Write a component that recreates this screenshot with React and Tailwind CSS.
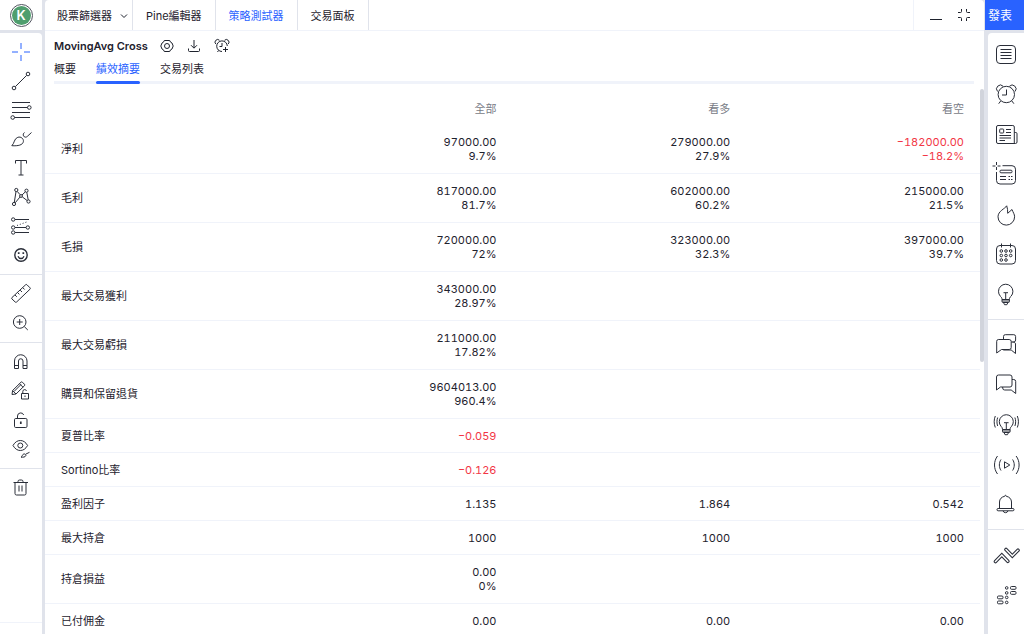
import React from "react";

const RED = "text-[#f23645]";

const toolGroups = [
  [
    {
      label: "十字準線",
      active: true,
      art: <path d="M3 12h6M15 12h6M12 3v6M12 15v6" />,
    },
    {
      label: "趨勢線",
      art: (
        <>
          <circle cx="5" cy="19" r="1.8" />
          <circle cx="19" cy="5" r="1.8" />
          <path d="M6.4 17.6 17.6 6.4" />
        </>
      ),
    },
    {
      label: "斐波那契",
      art: (
        <>
          <path d="M3 4.5h18M3 9.5h15.5M3 14.5h18M5.500 19.500h15.500" />
          <circle cx="20.300" cy="9.500" r="1.800" />
          <circle cx="3.700" cy="19.500" r="1.800" />
        </>
      ),
    },
    {
      label: "筆刷",
      art: (
        <>
          <path d="M2.8 18.7C5.5 16.5 5 11.5 8.8 10.3c3.2-1 6 1.5 5.6 4.2-.6 3.6-5.2 4.6-11.6 4.2z" />
          <path d="M15.5 5.5c-1.2.8-1.6 2.2-1 3.4.8 1.5 2.6 1.7 3.8.5L22.5 5.5" />
        </>
      ),
    },
    {
      label: "文字",
      art: <path d="M6.5 7.5V4.5h11v3M12 4.5v14.5M9.5 19h5" />,
    },
    {
      label: "型態",
      art: (
        <>
          <circle cx="7.3" cy="5" r="1.6" />
          <circle cx="17.5" cy="5.7" r="1.6" />
          <circle cx="19.5" cy="16.5" r="1.6" />
          <circle cx="5" cy="19" r="1.6" />
          <circle cx="12" cy="11" r="1.4" />
          <path d="M7 6.6 5.3 17.4M8.2 6.4 11.2 9.8M16.3 6.9 13 10M17.8 7.3l1.4 7.6M13.2 11.8l5 3.8M10.9 12.1 6.2 17.8" />
        </>
      ),
    },
    {
      label: "預測",
      art: (
        <>
          <circle cx="4.2" cy="5.5" r="1.7" />
          <circle cx="4.2" cy="13.5" r="1.7" />
          <circle cx="18.8" cy="13.5" r="1.7" />
          <circle cx="4.2" cy="18.5" r="1.7" />
          <path d="M6 5.5h14M6 13.5h11M6 18.5h14" />
          <path strokeDasharray="1 2" d="M8 11.5 19 7.5" />
        </>
      ),
    },
    {
      label: "圖示",
      art: (
        <>
          <circle cx="12" cy="12" r="6.200" strokeWidth="1.400" />
          <path strokeWidth="1.300" d="M9 13.200c.7 1.700 1.700 2.300 3 2.300s2.300-.6 3-2.300" />
          <path strokeWidth="1.700" d="M9.700 9.200v1.700M14.300 9.200v1.700" />
        </>
      ),
    },
  ],
  [
    {
      label: "測量",
      art: (
        <>
          <path d="M3 15.500 16.600 2.800a1 1 0 0 1 1.400 0l3 3a1 1 0 0 1 0 1.400L7.600 20a1 1 0 0 1-1.400 0L3 17a1 1 0 0 1 0-1.500z" />
          <path d="m6 13 1.800 1.800M8.600 10.600l1.800 1.800M11.200 8.200l1.800 1.800M13.800 5.700l1.800 1.800" />
        </>
      ),
    },
    {
      label: "放大",
      art: (
        <>
          <circle cx="10.700" cy="11" r="6.300" />
          <path d="m15.300 15.600 3.500 3.400M10.700 8v6M7.700 11h6" />
        </>
      ),
    },
  ],
  [
    {
      label: "磁鐵",
      art: (
        <>
          <path d="M5.500 18.500v-7.500a6.200 6.200 0 0 1 12.500 0v7.500h-4v-7.500a2.200 2.200 0 0 0-4.500 0v7.500z" />
          <path d="M5.500 15.500h4M14 15.500h4" />
        </>
      ),
    },
    {
      label: "保持繪圖模式",
      art: (
        <>
          <path d="m3 15.500.6-4L12 3.200a1 1 0 0 1 1.400 0L15.500 5.300a1 1 0 0 1 0 1.400L7 15z" />
          <path d="m10.500 4.700 3.500 3.500M5 12.500l7-7M3.600 11.500 7 15" />
          <path d="M12.500 14.500h7v5.500h-7zM13.800 14.500v-2a1.900 1.900 0 0 1 3.700-.6M16 16.500v1.500" />
        </>
      ),
    },
    {
      label: "鎖定",
      art: (
        <>
          <rect x="5.500" y="10.500" width="12.500" height="9" rx="1.200" />
          <path d="M8.500 10.500V8a3.200 3.200 0 0 1 6.200-1" />
          <path strokeWidth="1.700" d="M11.800 13.500v2.500" />
        </>
      ),
    },
    {
      label: "隱藏",
      art: (
        <>
          <path d="M4 8.500C6 5 8.500 3.500 11.300 3.500s5.300 1.500 7.300 5c-2 3.500-4.500 5-7.300 5S6 12 4 8.500z" />
          <circle cx="11.300" cy="8.500" r="2.500" />
          <path d="M12 20.200c1.600-.7 1-2.700 2.800-3.200 1.400-.4 2.500.8 2 1.800-.6 1.300-2.600 1.500-4.800 1.400zM17 17l3.500-1.700" />
        </>
      ),
    },
  ],
  [
    {
      label: "移除",
      art: (
        <>
          <path d="M4.500 6.500h14.500M6 6.500v11a1.500 1.500 0 0 0 1.500 1.500h8a1.500 1.500 0 0 0 1.500-1.500v-11M9 6.500v-1a1.500 1.500 0 0 1 1.500-1.500h2a1.500 1.500 0 0 1 1.500 1.500v1M10 9.500v6M13 9.500v6" />
        </>
      ),
    },
  ],
];

const widgetGroups = [
  [
    {
      label: "觀察清單",
      art: (
        <>
          <rect x="4.500" y="4.500" width="19" height="18" rx="3.500" />
          <path d="M8.500 8.500h11M8.500 11.500h11M8.500 14.500h11M8.500 17.500h11" />
        </>
      ),
    },
    {
      label: "警報",
      art: (
        <>
          <circle cx="14.300" cy="13.500" r="8.200" />
          <path d="M14.500 8.500v5.500h-4.500M8.700 20l-2 2.700M19.900 20l2 2.700M5.600 10.500A3.600 3.600 0 1 1 11.200 5.300M17.400 5.300a3.600 3.600 0 1 1 5.600 5.200" />
        </>
      ),
    },
    {
      label: "新聞",
      art: (
        <>
          <path d="M22.300 22.500H6a1.500 1.500 0 0 1-1.500-1.500V6A1.500 1.500 0 0 1 6 4.500h14.800a1.500 1.500 0 0 1 1.500 1.500zM22.300 11.500h1.500a1.200 1.200 0 0 1 1.200 1.200v8.300a1.500 1.500 0 0 1-1.500 1.500h-2" />
          <rect x="7.700" y="8" width="4" height="4" rx=".8" />
          <path d="M14 8.500h5M14 11.500h5M7.500 14.500h11.500M7.500 17h11.500M7.500 19.500h5.500" />
        </>
      ),
    },
    {
      label: "資料視窗",
      art: (
        <>
          <path d="M10.500 4.700H20a3.500 3.500 0 0 1 3.500 3.500V19.500a3.500 3.500 0 0 1-3.500 3.500H8a3.500 3.500 0 0 1-3.500-3.500V11" />
          <path d="M4.500 1v3M4.500 6v3M.5 5h3M5.500 5h3" />
          <rect x="8" y="9.200" width="12" height="2.600" rx="1" />
          <path d="M8 15.500h6M16.500 15.500h1.500M19 15.500h1.500M8 18.500h6M16.500 18.500h1.500M19 18.500h1.500" />
        </>
      ),
    },
    {
      label: "熱門清單",
      art: (
        <path d="M14.700 4.800C13 7.800 6 10 6 15.800a8.300 8.300 0 0 0 16.600 0c0-2.600-1.500-4.300-2.600-7.300l-4.300 3.800C15.800 9.500 15.500 7 14.700 4.800z" />
      ),
    },
    {
      label: "日曆",
      art: (
        <>
          <rect x="4.500" y="4.500" width="19" height="18.500" rx="3.500" />
          <path d="M9.500 2.500v4M18.500 2.500v4" />
          {[
            [9.3, 10],
            [14, 10],
            [18.7, 10],
            [9.3, 14.5],
            [14, 14.5],
            [18.7, 14.5],
            [9.3, 19],
            [14, 19],
          ].map(([x, y]) => (
            <circle key={`${x}-${y}`} cx={x} cy={y} r="1.3" />
          ))}
        </>
      ),
    },
    {
      label: "我的觀點",
      art: (
        <>
          <path d="M10 18.500c0-1.500-.5-2.200-1.600-3.200a7.200 7.200 0 1 1 10.600 0c-1.100 1-1.600 1.700-1.600 3.200z" />
          <path d="M13.700 18.500v-6.500M11.500 11.700h4.500M10 18.500v2a1 1 0 0 0 1 1h5.400a1 1 0 0 0 1-1v-2M11.500 21.500l1 2.200h2.400l1-2.200M10 20h7.400" />
        </>
      ),
    },
  ],
  [
    {
      label: "公開聊天",
      art: (
        <>
          <path d="M11.500 8.300V5.500a1.800 1.800 0 0 1 1.800-1.800h8.500a1.800 1.800 0 0 1 1.800 1.800V9a2 2 0 0 1-2 2h-2.500M20.500 11c1.800 0 3 .7 3 2v9.500l-4.300-3.500h-7.500a1 1 0 0 1-.9-.8" />
          <path d="M6.300 8.500h10.900a2 2 0 0 1 2 2v6a2 2 0 0 1-2 2H9.500L4.700 22V10.300a1.800 1.800 0 0 1 1.600-1.800z" fill="#fff" />
        </>
      ),
    },
    {
      label: "私人聊天",
      art: (
        <>
          <path d="M20 8.500h1.700a2 2 0 0 1 2 2V22.500l-4.500-3.500h-6.500a2 2 0 0 1-2-2v-1" />
          <path d="M6.500 4H18a2 2 0 0 1 2 2v8a2 2 0 0 1-2 2H8.500L4.500 19V6a2 2 0 0 1 2-2z" fill="#fff" />
        </>
      ),
    },
    {
      label: "觀點串流",
      art: (
        <>
          <path d="M10.500 18.500c0-1.500-.5-2.200-1.500-3.200a7 7 0 1 1 10.600 0c-1 1-1.500 1.700-1.500 3.200z" />
          <path d="M14.300 18.500v-6.500M12 11.700h4.600M10.500 18.500v2a1 1 0 0 0 1 1h5.600a1 1 0 0 0 1-1v-2M12 21.500l1 2.200h2.500l1-2.200M10.500 20h7.600" />
          <path d="M5.700 6.500c-1 2.500-1 6 0 8.500M3.300 5c-1.500 3.500-1.500 8 0 11.500M22.900 6.500c1 2.500 1 6 0 8.500M25.300 5c1.500 3.500 1.500 8 0 11.500" />
        </>
      ),
    },
    {
      label: "直播",
      art: (
        <>
          <path d="m12.500 10.800 5.300 3.200-5.300 3.200zM9 8.500c-2.200 3.300-2.200 7.700 0 11M20.600 8.500c2.200 3.300 2.200 7.700 0 11M5.500 5c-4 5.300-4 12.700 0 18M24.100 5c4 5.300 4 12.700 0 18" />
        </>
      ),
    },
    {
      label: "通知",
      art: (
        <>
          <path d="M7.500 17.500V11c0-3 2.300-5.300 5.200-5.700 0-1.300 1.600-1.300 1.600 0 2.900.4 5.200 2.700 5.200 5.700v6.500" />
          <rect x="5" y="17.500" width="17" height="2.300" rx="1.100" />
          <path d="M11 19.800a2.600 2.600 0 0 0 5 0" />
        </>
      ),
    },
  ],
  [
    {
      label: "下單面板",
      art: (
        <>
          <path strokeWidth="3.600" strokeLinecap="round" strokeLinejoin="miter" d="m3.500 20.500 6.300-6.500 6 6.300M14 8.500l6.300 6.500L26 9.200" />
          <path stroke="#fff" strokeWidth="1.500" strokeLinecap="round" strokeLinejoin="miter" d="m3.500 20.500 6.300-6.500 6 6.300M14 8.500l6.300 6.500L26 9.200" />
        </>
      ),
    },
    {
      label: "市場深度",
      art: (
        <>
          <rect x="18.500" y="5.500" width="5.500" height="2.800" rx="1" />
          <rect x="18.500" y="10.500" width="5.500" height="2.800" rx="1" />
          <rect x="5.500" y="15" width="5.500" height="2.800" rx="1" />
          <rect x="5.500" y="20" width="5.500" height="2.800" rx="1" />
          <circle cx="14.700" cy="6.900" r="1.300" />
          <circle cx="14.700" cy="11.900" r="1.300" />
          <circle cx="14.700" cy="16.400" r="1.300" />
          <circle cx="14.700" cy="21.400" r="1.300" />
        </>
      ),
    },
  ],
];

const rows = [
  { name: "淨利", cells: [["97000.00", "9.7%"], ["279000.00", "27.9%"], ["−182000.00", "−18.2%"]] },
  { name: "毛利", cells: [["817000.00", "81.7%"], ["602000.00", "60.2%"], ["215000.00", "21.5%"]] },
  { name: "毛損", cells: [["720000.00", "72%"], ["323000.00", "32.3%"], ["397000.00", "39.7%"]] },
  { name: "最大交易獲利", cells: [["343000.00", "28.97%"], [], []] },
  { name: "最大交易虧損", cells: [["211000.00", "17.82%"], [], []] },
  { name: "購買和保留退貨", cells: [["9604013.00", "960.4%"], [], []] },
  { name: "夏普比率", cells: [["−0.059"], [], []] },
  { name: "Sortino比率", cells: [["−0.126"], [], []] },
  { name: "盈利因子", cells: [["1.135"], ["1.864"], ["0.542"]] },
  { name: "最大持倉", cells: [["1000"], ["1000"], ["1000"]] },
  { name: "持倉損益", cells: [["0.00", "0%"], [], []] },
  { name: "已付佣金", cells: [["0.00"], ["0.00"], ["0.00"]] },
];

function Icon({ size, className = "", children }) {
  return (
    <svg
      width={size}
      height={size}
      viewBox={`0 0 ${size} ${size}`}
      fill="none"
      stroke="currentColor"
      strokeWidth="1"
      strokeLinejoin="round"
      overflow="visible"
      aria-hidden="true"
      className={`shrink-0 ${className}`}
    >
      {children}
    </svg>
  );
}

function LeftToolbar() {
  return (
    <aside className="flex w-[42px] shrink-0 flex-col gap-[3px]">
      <div className="flex h-[30px] shrink-0 items-center justify-center bg-white">
        <button aria-label="帳戶" className="flex size-[23px] items-center justify-center rounded-full border border-[#50535e] bg-white">
          <span className="flex size-[19px] items-center justify-center rounded-full bg-[#4f9e6e] text-[13px] font-semibold leading-none text-white">
            K
          </span>
        </button>
      </div>
      <nav className="flex min-h-0 grow flex-col overflow-hidden rounded-tr-[4px] bg-white">
        {toolGroups.map((group, i) => (
          <div key={i} className={`flex flex-col ${i === 0 ? "pb-[5px]" : "pb-[5px]"} pt-1 ${i < toolGroups.length - 1 ? "border-b border-[#e0e3eb]" : ""}`}>
            {group.map((tool) => (
              <button
                key={tool.label}
                aria-label={tool.label}
                className={`flex h-[29px] items-center justify-center ${tool.active ? "text-[#2962ff]" : "text-[#2a2e39]"}`}
              >
                <Icon size={24}>{tool.art}</Icon>
              </button>
            ))}
          </div>
        ))}
        <div className="mt-auto h-3 border-t border-[#f0f3fa]" />
      </nav>
    </aside>
  );
}

function RightToolbar() {
  return (
    <aside className="flex w-[36px] shrink-0 flex-col gap-[3px]">
      <button className="-ml-[3px] flex h-[30px] shrink-0 items-center overflow-hidden whitespace-nowrap bg-[#2962ff] pl-[3px] pt-px text-[12px] text-white">
        發表
      </button>
      <nav className="flex min-h-0 grow flex-col overflow-hidden rounded-tl-[4px] bg-white text-[#2a2e39]">
        {widgetGroups.map((group, i) => (
          <div
            key={i}
            className={`flex flex-col pb-1 ${i === 0 ? "pt-0.5" : "pt-[5px]"} ${i < widgetGroups.length - 1 ? "border-b border-[#e0e3eb]" : ""}`}
          >
            {group.map((w) => (
              <button key={w.label} aria-label={w.label} className="flex h-10 items-center justify-center">
                <Icon size={28}>{w.art}</Icon>
              </button>
            ))}
          </div>
        ))}
      </nav>
    </aside>
  );
}

function PanelTabs() {
  return (
    <header className="flex h-[31px] shrink-0 border-b border-[#f0f3fa]">
      <button className="flex items-center gap-2 border-r border-[#e0e3eb] pl-3 pr-1 pt-px">
        股票篩選器
        <Icon size={8}>
          <path d="m1 2.500 3 3 3-3" />
        </Icon>
      </button>
      <button className="border-r border-[#e0e3eb] px-[13px] pt-px">Pine編輯器</button>
      <button className="border-r border-[#e0e3eb] px-[13px] pt-px text-[#2962ff]">策略測試器</button>
      <button className="border-r border-[#e0e3eb] px-[13px] pt-px">交易面板</button>
      <div className="ml-auto flex items-center gap-3 border-l border-[#f0f3fa] pl-[14px] pr-3">
        <button aria-label="最小化">
          <Icon size={16}>
            <path d="M2 12.500h12" />
          </Icon>
        </button>
        <button aria-label="還原">
          <Icon size={16}>
            <path d="M2 5.500h2.500a1 1 0 0 0 1-1V2M10.500 2v2.500a1 1 0 0 0 1 1H14M14 10.500h-2.500a1 1 0 0 0-1 1V14M5.500 14v-2.500a1 1 0 0 0-1-1H2" />
          </Icon>
        </button>
      </div>
    </header>
  );
}

function StrategyHeader() {
  return (
    <div className="shrink-0 pl-[9px] pr-[10px] pt-[7px]">
      <div className="flex h-4 items-center gap-3">
        <h1 className="font-semibold">MovingAvg Cross</h1>
        <button aria-label="設定">
          <Icon size={14}>
            <path d="M4.300 1.500h5.400l.8 1.600L12 4l1.200 3L12 10l-1.500.9-.8 1.600H4.300l-.8-1.600L2 10 .8 7 2 4l1.500-.9z" />
            <circle cx="7" cy="7" r="2.500" />
          </Icon>
        </button>
        <button aria-label="下載">
          <Icon size={16}>
            <path d="M8 2v8M5 7.200l3 3 3-3M2.500 10.500v2a1 1 0 0 0 1 1h9a1 1 0 0 0 1-1v-2" />
          </Icon>
        </button>
        <button aria-label="新增警報">
          <Icon size={16}>
            <path d="M13.300 8a5.300 5.300 0 1 0-5.300 5.500M8 5v3.500H5.500M1.800 6A2.600 2.600 0 0 1 5.500 2.300M10.500 2.300A2.600 2.600 0 0 1 14.200 6M4.500 12.500 3.500 14" />
            <path d="M11.500 9v5M9 11.500h5" />
          </Icon>
        </button>
      </div>
      <div className="mt-[5px] flex h-[25px] gap-5 border-b-[3px] border-[#f0f3fa]">
        <button className="-mb-[3px] h-[25px] pb-[5px]">概要</button>
        <button className="relative -mb-[3px] h-[25px] pb-[5px] text-[#2962ff]">
          績效摘要
          <span className="absolute inset-x-0 bottom-0 h-[3px] rounded-full bg-[#2962ff]" />
        </button>
        <button className="-mb-[3px] h-[25px] pb-[5px]">交易列表</button>
      </div>
    </div>
  );
}

function SummaryTable() {
  return (
    <div className="flex min-h-0 grow">
      <div className="min-w-0 grow overflow-hidden">
        <table className="w-full table-fixed border-collapse tabular-nums">
          <thead>
            <tr className="h-10 text-[#787b86]">
              <td />
              {["全部", "看多", "看空"].map((h) => (
                <th key={h} scope="col" className="pr-4 pt-[10px] text-right font-normal">
                  {h}
                </th>
              ))}
            </tr>
          </thead>
          <tbody>
            {rows.map((row) => (
              <tr key={row.name} className={`border-b border-[#f0f3fa] ${row.cells[0].length > 1 ? "h-[49px]" : "h-[34px]"}`}>
                <th scope="row" className="pl-4 pt-px text-left font-normal">
                  {row.name}
                </th>
                {row.cells.map((lines, i) => (
                  <td key={i} className={`pr-4 pt-px text-right leading-[14px] ${lines[0]?.startsWith("−") ? RED : ""}`}>
                    {lines.map((line) => (
                      <div key={line}>{line}</div>
                    ))}
                  </td>
                ))}
              </tr>
            ))}
          </tbody>
        </table>
      </div>
      <div className="w-1 shrink-0 pt-[5px]">
        <div className="h-1/2 rounded-full bg-[#d1d4dc]" />
      </div>
    </div>
  );
}

export default function App() {
  return (
    <div className="flex h-screen overflow-hidden bg-[#e0e3eb] font-['Inter','Noto_Sans_CJK_TC',sans-serif] text-[11px] leading-4 text-[#1e222d]">
      <LeftToolbar />
      <main className="ml-[3px] mr-1 flex min-w-0 grow flex-col overflow-hidden rounded-t-[4px] bg-white">
        <PanelTabs />
        <StrategyHeader />
        <SummaryTable />
      </main>
      <RightToolbar />
    </div>
  );
}
